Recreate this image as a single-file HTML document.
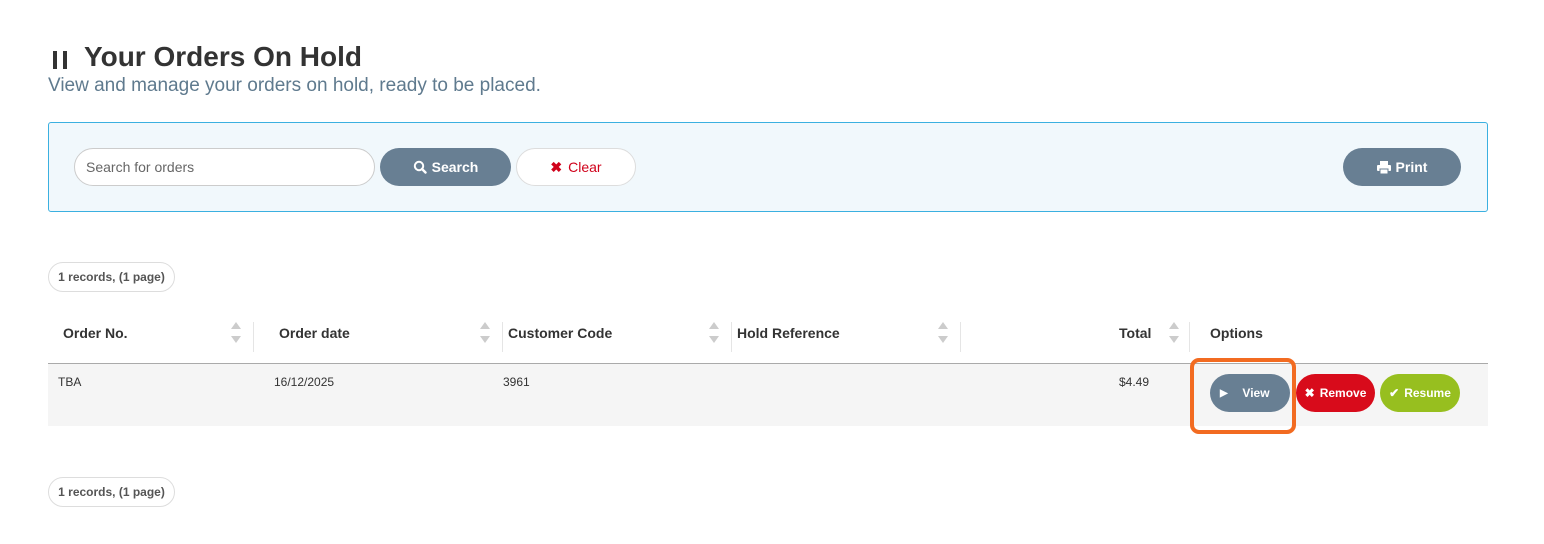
<!DOCTYPE html>
<html><head><meta charset="utf-8"><style>
*{box-sizing:border-box;margin:0;padding:0}
body{width:1544px;height:544px;background:#fff;font-family:"Liberation Sans",sans-serif;position:relative;overflow:hidden;color:#333}
.a{position:absolute}
.btn{position:absolute;border-radius:20px;color:#fff;font-weight:bold;display:flex;align-items:center;justify-content:center}
.pill{position:absolute;left:48px;width:127px;height:30px;border:1px solid #ddd;border-radius:15px;font-size:12px;font-weight:bold;color:#555;display:flex;align-items:center;justify-content:center}
.th{position:absolute;top:325px;font-size:14px;font-weight:bold;color:#333}
.sep{position:absolute;top:322px;width:1px;height:30px;background:#e5e5e5}
.arr{position:absolute;top:320px;width:10px;height:26px}
.td{position:absolute;top:375px;font-size:12px;color:#333}
</style></head><body>
<div class="a" style="left:53px;top:51px;width:4px;height:18px;background:#333"></div>
<div class="a" style="left:63px;top:51px;width:4px;height:18px;background:#333"></div>
<div class="a" style="left:84px;top:41px;font-size:28px;font-weight:bold;color:#333">Your Orders On Hold</div>
<div class="a" style="left:48px;top:75px;font-size:19px;color:#5f7a8e">View and manage your orders on hold, ready to be placed.</div>
<div class="a" style="left:48px;top:122px;width:1440px;height:90px;background:#f1f8fc;border:1px solid #3bb0e0;border-radius:3px"></div>
<div class="a" style="left:74px;top:148px;width:301px;height:38px;background:#fff;border:1px solid #ccc;border-radius:19px;font-size:14px;color:#666;padding:10px 0 0 11px">Search for orders</div>
<div class="btn" style="left:380px;top:148px;width:131px;height:38px;background:#687f93;font-size:14px">
<svg width="14" height="14" viewBox="0 0 14 14" style="margin-right:5px"><circle cx="6" cy="6" r="4.2" fill="none" stroke="#fff" stroke-width="2"/><path d="M9 9l3.5 3.5" stroke="#fff" stroke-width="2.4" stroke-linecap="round"/></svg>Search</div>
<div class="btn" style="left:516px;top:148px;width:120px;height:38px;background:#fff;border:1px solid #ddd;color:#d0021b;font-weight:normal;font-size:14px"><span style="font-weight:bold;margin-right:6px">✖</span>Clear</div>
<div class="btn" style="left:1343px;top:148px;width:118px;height:38px;background:#687f93;font-size:14px">
<svg width="14" height="13" viewBox="0 0 14 13" style="margin-right:5px"><rect x="3" y="0" width="8" height="4" fill="#fff"/><rect x="0" y="4" width="14" height="6" rx="1" fill="#fff"/><rect x="3" y="8" width="8" height="5" fill="#fff" stroke="#687f93" stroke-width="1"/></svg>Print</div>
<div class="pill" style="top:262px">1 records, (1 page)</div>
<div class="th" style="left:63px">Order No.</div>
<div class="th" style="left:279px">Order date</div>
<div class="th" style="left:508px">Customer Code</div>
<div class="th" style="left:737px">Hold Reference</div>
<div class="th" style="left:1119px">Total</div>
<div class="th" style="left:1210px">Options</div>
<div class="sep" style="left:253px"></div><div class="sep" style="left:502px"></div><div class="sep" style="left:731px"></div><div class="sep" style="left:960px"></div><div class="sep" style="left:1189px"></div>
<svg class="arr" style="left:231px" viewBox="0 0 10 26"><path d="M0 9L5 2L10 9Z M0 16L5 23L10 16Z" fill="#ccc"/></svg>
<svg class="arr" style="left:480px" viewBox="0 0 10 26"><path d="M0 9L5 2L10 9Z M0 16L5 23L10 16Z" fill="#ccc"/></svg>
<svg class="arr" style="left:709px" viewBox="0 0 10 26"><path d="M0 9L5 2L10 9Z M0 16L5 23L10 16Z" fill="#ccc"/></svg>
<svg class="arr" style="left:938px" viewBox="0 0 10 26"><path d="M0 9L5 2L10 9Z M0 16L5 23L10 16Z" fill="#ccc"/></svg>
<svg class="arr" style="left:1169px" viewBox="0 0 10 26"><path d="M0 9L5 2L10 9Z M0 16L5 23L10 16Z" fill="#ccc"/></svg>
<div class="a" style="left:48px;top:363px;width:1440px;height:1px;background:#aaa"></div>
<div class="a" style="left:48px;top:364px;width:1440px;height:62px;background:#f5f5f5"></div>
<div class="td" style="left:58px">TBA</div>
<div class="td" style="left:274px">16/12/2025</div>
<div class="td" style="left:503px">3961</div>
<div class="td" style="left:1119px">$4.49</div>
<div class="btn" style="left:1210px;top:374px;width:80px;height:38px;background:#687f93;font-size:12px"><span style="position:absolute;left:10px;font-size:10px">▶</span><span style="margin-left:12px">View</span></div>
<div class="btn" style="left:1296px;top:374px;width:79px;height:38px;background:#d80b1b;font-size:12px"><span style="margin-right:5px">✖</span>Remove</div>
<div class="btn" style="left:1380px;top:374px;width:80px;height:38px;background:#97bf1f;font-size:12px"><span style="margin-right:5px">✔</span>Resume</div>
<div class="a" style="left:1190px;top:358px;width:106px;height:76px;border:4px solid #f26b21;border-radius:9px"></div>
<div class="pill" style="top:477px">1 records, (1 page)</div>
</body></html>
